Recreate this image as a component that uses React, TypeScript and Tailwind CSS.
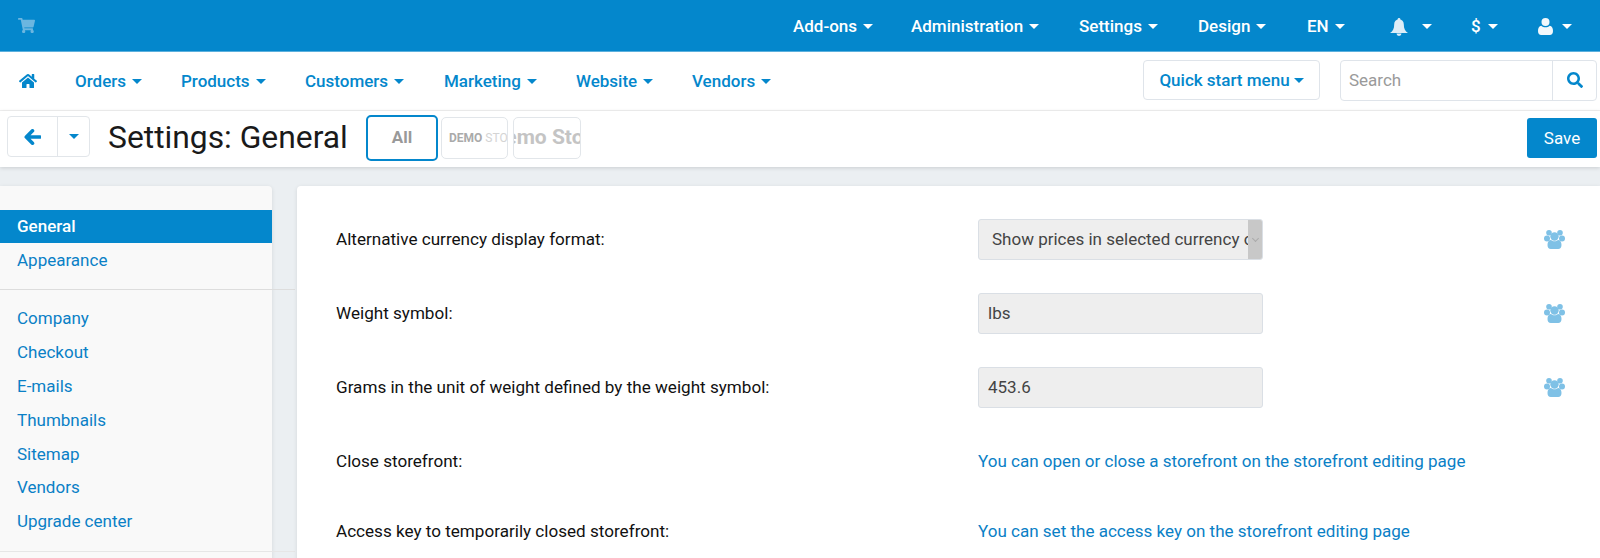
import { FaHome, FaSearch, FaShoppingCart } from "react-icons/fa";

const Caret = ({ className = "" }: { className?: string }) => (
  <span className={`inline-block w-0 h-0 border-x-[5px] border-x-transparent border-t-[5px] border-t-current ${className}`} />
);

const UsersIcon = () => (
  <svg width="21" height="19" viewBox="0 0 21 19" className="text-[#7fc1e6] fill-current">
    <circle cx="5" cy="2.800" r="2.800" />
    <circle cx="16" cy="2.800" r="2.800" />
    <circle cx="10.500" cy="6.500" r="4.200" />
    <ellipse cx="3" cy="8.500" rx="3" ry="3" />
    <ellipse cx="18" cy="8.500" rx="3" ry="3" />
    <path d="M3.500 15c0-3 1.200-5 3.500-5 1 .9 2.200 1.300 3.500 1.300S13 10.900 14 10c2.300 0 3.500 2 3.500 5 0 2.500-1.300 4-3.300 4H6.800c-2 0-3.300-1.500-3.300-4Z" />
  </svg>
);

const BellIcon = () => (
  <svg width="18" height="18" viewBox="0 0 18 18" className="text-[#deedf7] fill-current">
    <circle cx="9" cy="1.400" r="1.400" />
    <path d="M9 1.500c3 0 4.800 2 4.800 4.700 0 4.300 1.200 6.700 4.200 8.800H0c3-2.100 4.200-4.500 4.200-8.800C4.200 3.500 6 1.500 9 1.500Z" />
    <path d="M6.500 15.500h5a2.500 2.500 0 0 1-5 0Z" />
  </svg>
);

const UserIcon = () => (
  <svg width="15" height="17" viewBox="0 0 15 17" className="text-[#f2f8fc] fill-current">
    <circle cx="7.500" cy="4" r="4" />
    <path d="M0 13c0-3 1-5 3.300-5.300C4.400 8.700 5.900 9.200 7.500 9.200s3.100-.5 4.200-1.500C14 8 15 10 15 13c0 2.500-1.300 4-3.200 4H3.200C1.300 17 0 15.500 0 13Z" />
  </svg>
);

const ArrowIcon = () => (
  <svg width="17" height="16" viewBox="0 0 17 16" className="text-[#0487cc]">
    <path d="M8.500 1.800 2.300 8l6.200 6.200M3 8h13" fill="none" stroke="currentColor" strokeWidth="3.600" strokeLinejoin="round" strokeLinecap="round" />
  </svg>
);

const sideMain = ["Company", "Checkout", "E-mails", "Thumbnails", "Sitemap", "Vendors", "Upgrade center"];
const mainNav = [
  { label: "Orders", w: "w-[106px]" },
  { label: "Products", w: "w-[124px]" },
  { label: "Customers", w: "w-[139px]" },
  { label: "Marketing", w: "w-[132px]" },
  { label: "Website", w: "w-[116px]" },
  { label: "Vendors", w: "w-[100px]" },
];

function TopItem({ label, className = "", gap = "ml-[6px]" }: { label: React.ReactNode; className?: string; gap?: string }) {
  return (
    <div className={`flex items-center text-white text-[17px] font-medium ${className}`}>
      {label}
      <Caret className={gap} />
    </div>
  );
}

function Row({ label, children, icon = false, className = "mb-[33px]" }: { label: string; children: React.ReactNode; icon?: boolean; className?: string }) {
  return (
    <div className={`flex items-center h-[41px] ${className}`}>
      <div className="w-[642px] text-[17.1px] text-[#111]">{label}</div>
      <div className="w-[566px]">{children}</div>
      {icon && <UsersIcon />}
    </div>
  );
}

const Field = ({ value }: { value: string }) => (
  <div className="flex items-center w-[285px] h-[41px] rounded-[3px] border border-[#dadfe5] bg-[#eeeeee] pl-[9px] text-[17px] text-[#444]">
    {value}
  </div>
);

export default function App() {
  return (
    <div className="h-[558px] overflow-hidden bg-[#ebeff2] font-['Roboto',sans-serif]">
      <div className="flex items-center justify-between h-[52px] bg-[#0487cc] border-b border-[#5cb0dd] pl-[18px]">
        <FaShoppingCart className="text-[#6cb6e0] text-[17px]" />
        <div className="flex items-center pt-[2px]">
          <TopItem label="Add-ons" className="w-[118px]" />
          <TopItem label="Administration" className="w-[168px]" />
          <TopItem label="Settings" className="w-[119px]" />
          <TopItem label="Design" className="w-[109px]" />
          <TopItem label="EN" className="w-[83px]" />
          <TopItem label={<BellIcon />} gap="ml-[14px]" className="w-[81px]" />
          <TopItem label="$" gap="ml-[7px]" className="w-[67px]" />
          <TopItem label={<UserIcon />} gap="ml-[9px]" className="w-[62px]" />
        </div>
      </div>

      <div className="flex items-center justify-between h-[59px] bg-white border-b border-[#f1f1f1] pb-[2px] pr-[3px]">
        <div className="flex items-center pt-[3px] pl-[19px]">
          <FaHome className="text-[#0487cc] text-[18px] mr-[38px] -mt-[1px]" />
          {mainNav.map((item) => (
            <div key={item.label} className={`flex items-center text-[#0487cc] text-[17px] font-medium ${item.w}`}>
              {item.label}
              <Caret className="ml-[6px]" />
            </div>
          ))}
        </div>
        <div className="flex items-center">
          <div className="flex items-center justify-center w-[177px] h-[40px] mr-[20px] pt-[1px] rounded-[4px] border border-[#dfe4ea] text-[#0487cc] text-[17px] font-medium">
            Quick start menu
            <Caret className="ml-[4px]" />
          </div>
          <div className="flex items-center w-[257px] h-[41px] rounded-[4px] border border-[#dfe4ea]">
            <div className="flex-1 pl-[8px] pt-[2px] text-[17px] text-[#9a9a9a]">Search</div>
            <div className="flex items-center justify-center w-[44px] h-full border-l border-[#dfe4ea]">
              <FaSearch className="text-[#0487cc] text-[16px]" />
            </div>
          </div>
        </div>
      </div>

      <div className="flex items-center justify-between h-[56px] bg-white shadow-[0_1px_4px_rgba(0,0,0,0.14)] pb-[2px] pl-[7px] pr-[3px]">
        <div className="flex items-center">
          <div className="flex h-[41px] w-[83px] mb-[3px] rounded-[4px] border border-[#e2e6ea]">
            <div className="flex items-center justify-center w-[50px] border-r border-[#e2e6ea]">
              <ArrowIcon />
            </div>
            <div className="flex flex-1 items-center justify-center text-[#0487cc]">
              <Caret />
            </div>
          </div>
          <h1 className="ml-[18px] w-[258px] text-[31.8px] text-[#1a1a1a] whitespace-nowrap">Settings: General</h1>
          <div className="flex items-center justify-center w-[72px] h-[46px] rounded-[5px] border-2 border-[#0487cc] text-[17px] font-bold text-[#999]">
            All
          </div>
          <div className="flex items-center ml-[3px] w-[67px] h-[42px] rounded-[5px] border border-[#e2e6ea] overflow-hidden pl-[7px] text-[12px] font-bold whitespace-nowrap">
            <span className="text-[#aaa]">DEMO</span>
            <span className="text-[#d4d4d4] ml-[3px] font-normal">STORE</span>
          </div>
          <div className="flex items-center justify-center ml-[5px] w-[68px] h-[42px] rounded-[5px] border border-[#e2e6ea] overflow-hidden text-[21px] font-bold text-[#c4c4c4] whitespace-nowrap">
            Demo Store
          </div>
        </div>
        <div className="flex items-center justify-center w-[70px] h-[40px] pt-[1px] rounded-[3px] bg-[#0487cc] text-white text-[17px]">
          Save
        </div>
      </div>

      <div className="flex mt-[19px]">
        <div className="relative w-[272px] shrink-0 h-[400px] pt-[24px] bg-[#f9f9f9] rounded-tr-[4px] shadow-[0_1px_4px_rgba(0,0,0,0.1)]">
          <div className="flex items-center h-[33px] pl-[17px] bg-[#0487cc] text-white text-[17px] font-medium">General</div>
          <div className="flex items-center h-[36px] pl-[17px] text-[#0a80c6] text-[17px]">Appearance</div>
          <div className="absolute left-0 top-[103px] w-[295px] h-px bg-[#dddddd]" />
          <div className="mt-[23px]">
            {sideMain.map((s) => (
              <div key={s} className="flex items-center h-[33.85px] pl-[17px] text-[#0a80c6] text-[17px]">{s}</div>
            ))}
          </div>
          <div className="absolute left-0 top-[365px] w-[295px] h-px bg-[#e6e6e6]" />
        </div>
        <div className="relative flex-1 ml-[25px] h-[400px] pt-[33px] pl-[39px] bg-white rounded-tl-[4px] shadow-[0_1px_4px_rgba(0,0,0,0.1)]">
          <Row label="Alternative currency display format:" icon>
            <div className="relative w-[285px] h-[41px] rounded-[3px] border border-[#dadfe5] bg-[#eeeeee] overflow-hidden flex items-center pl-[13px] text-[17px] text-[#444] whitespace-nowrap">
              Show prices in selected currency only
              <div className="absolute right-0 top-0 bottom-0 w-[14px] bg-[#c8c8c8] flex items-center justify-center">
                <span className="w-[5px] h-[5px] border-r border-b border-[#aaa] rotate-45 -mt-[2px]" />
              </div>
            </div>
          </Row>
          <Row label="Weight symbol:" icon>
            <Field value="lbs" />
          </Row>
          <Row label="Grams in the unit of weight defined by the weight symbol:" icon>
            <Field value="453.6" />
          </Row>
          <Row label="Close storefront:" className="mb-[29px]">
            <span className="text-[#0a80c6] text-[17.05px] whitespace-nowrap">You can open or close a storefront on the storefront editing page</span>
          </Row>
          <Row label="Access key to temporarily closed storefront:">
            <span className="text-[#0a80c6] text-[17.05px] whitespace-nowrap">You can set the access key on the storefront editing page</span>
          </Row>
        </div>
      </div>
    </div>
  );
}
